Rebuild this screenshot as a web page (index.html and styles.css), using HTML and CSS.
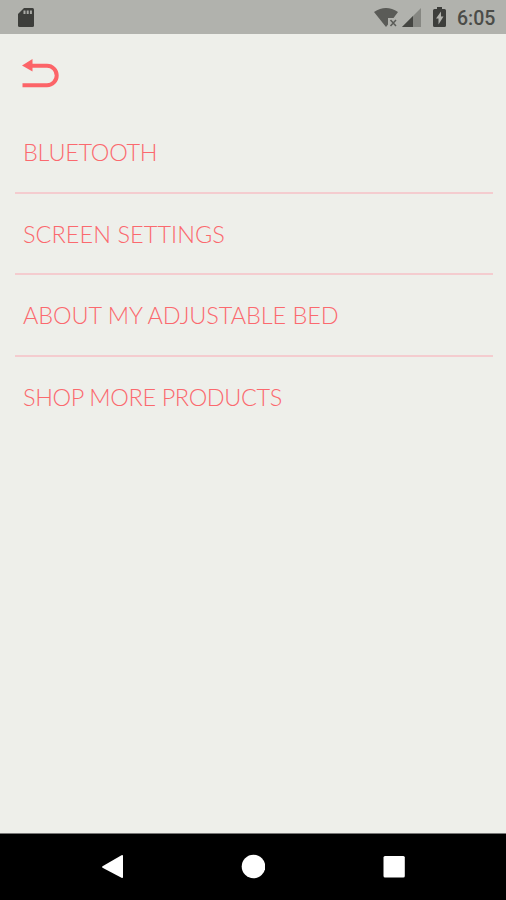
FILE: index.html
```html
<!DOCTYPE html>
<html lang="en">
<head>
    <meta charset="UTF-8">
    <meta name="viewport" content="width=device-width, initial-scale=1.0">
    <title>Settings</title>
    <link rel="stylesheet" href="styles.css">
</head>
<body>
    <div class="wrap">
        <div class="status">
            <svg class="sd" width="16" height="20" viewBox="0 0 16 20">
                <path fill="#3d3e3b" d="M6 0h8.5q1.5 0 1.5 1.5v16q0 1.5-1.500 1.500h-13Q0 19 0 17.500V6z"/>
                <path fill="#a9aaa6" d="M5.500 2.500h2v3.500h-2zM8.700 2.500h2v3.500h-2zM11.900 2.500h2v3.500h-2z"/>
            </svg>
            <svg class="wifi" width="25" height="20" viewBox="0 0 25 20">
                <path fill="#5a5b57" d="M0 4Q12-4 24 4l-4.500 6H14v6.500L12 19z"/>
                <path fill="none" stroke="#5a5b57" stroke-width="1.500" d="M16.500 12l5.500 6M22 12l-5.500 6"/>
            </svg>
            <svg class="signal" width="19" height="19" viewBox="0 0 19 19">
                <path fill="#868782" d="M19 0v19H0z"/>
                <path fill="#454642" d="M11 8v11H0z"/>
            </svg>
            <svg class="battery" width="13" height="20" viewBox="0 0 13 20">
                <path fill="#3d3e3b" d="M4 0h5v2h2.500Q13 2 13 3.500v15q0 1.500-1.500 1.500h-10Q0 20 0 18.500v-15Q0 2 1.500 2H4z"/>
                <path fill="#b1b2ad" d="M8 4.500v5h2.500L5.500 17.500v-6H3z"/>
            </svg>
            <span class="time">6:05</span>
        </div>
        <div class="content">
            <svg class="back" width="38" height="30" viewBox="0 0 38 30">
                <path fill="none" stroke="#fc6468" stroke-width="4" d="M8 6.800h17a9.700 9.700 0 0 1 0 19.400H.5"/>
                <path fill="#fc6468" d="M0 6.500L10.500 0v12.500z"/>
            </svg>
            <div class="menu">
                <div class="item bluetooth">BLUETOOTH</div>
                <div class="item screen">SCREEN SETTINGS</div>
                <div class="item about">ABOUT MY ADJUSTABLE BED</div>
                <div class="item shop">SHOP MORE PRODUCTS</div>
            </div>
        </div>
        <div class="nav">
            <svg width="24" height="26" viewBox="0 0 24 26">
                <path fill="#fff" d="M2.500 12.200L21.500 1.200q1.500-.7 1.500.8v21q0 1.500-1.500.8L2.500 13.800q-1-.8 0-1.600z"/>
            </svg>
            <svg width="24" height="26" viewBox="0 0 24 26">
                <circle fill="#fff" cx="12.500" cy="12.500" r="11.800"/>
            </svg>
            <svg width="24" height="26" viewBox="0 0 24 26">
                <rect fill="#fff" x="1.500" y="2" width="21.300" height="21.500" rx="1.500"/>
            </svg>
        </div>
    </div>
</body>
</html>
```

FILE: styles.css
```css
body {
  margin: 0;
  background: #eeefea;
}
.wrap {
  display: flex;
  flex-direction: column;
  height: 900px;
  overflow: hidden;
}
.status {
  box-sizing: border-box;
  display: flex;
  align-items: flex-start;
  height: 34px;
  padding: 8px 10px 0 18px;
  background: #b1b2ad;
}
.status .wifi {
  margin-left: auto;
}
.status .signal {
  margin-left: 3px;
}
.status .battery {
  margin: -1px 0 0 12px;
}
.status .time {
  width: 39px;
  margin-left: 11px;
  font: 500 19.5px/21px Roboto, sans-serif;
  color: #4b4c48;
  white-space: nowrap;
}
.content {
  flex: 1;
  padding: 25px 13px 0 15px;
}
.back {
  display: block;
  margin: 0 0 23px 7px;
}
.item {
  box-sizing: border-box;
  height: 81.7px;
  padding-left: 8px;
  border-bottom: 2px solid #f4cccf;
  font: 300 23.5px/81px Lato, sans-serif;
  color: #fb696e;
  white-space: nowrap;
}
.item:last-child {
  border-bottom: 0;
}
.bluetooth {
  letter-spacing: -0.3px;
}
.screen {
  letter-spacing: 0.05px;
}
.about {
  letter-spacing: -0.08px;
}
.shop {
  letter-spacing: -0.38px;
}
.nav {
  box-sizing: border-box;
  display: flex;
  justify-content: center;
  gap: 117px;
  height: 67px;
  padding-top: 20px;
  border-top: 1px solid #777;
  background: #000;
}
```
